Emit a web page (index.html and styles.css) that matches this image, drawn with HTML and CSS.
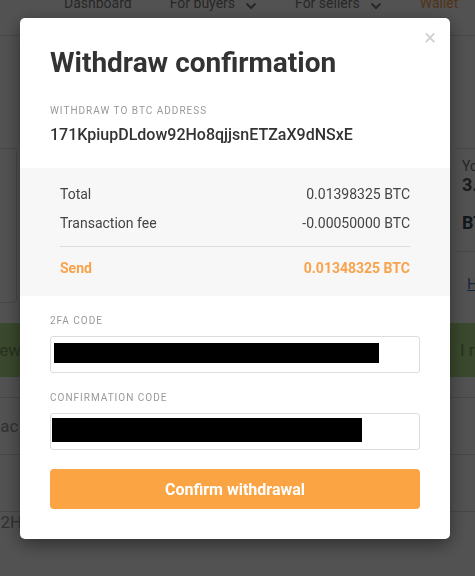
FILE: index.html
```html
<!DOCTYPE html>
<html lang="en">
<head>
  <meta charset="UTF-8">
  <title>Wallet - Withdraw confirmation</title>
  <link rel="stylesheet" href="styles.css">
</head>
<body>
  <div class="nav">
    <a class="nav-link">Dashboard</a>
    <a class="nav-link">For buyers <svg class="caret" viewBox="0 0 12 8"><polyline points="1.5,1.5 6,6 10.5,1.5"/></svg></a>
    <a class="nav-link">For sellers <svg class="caret" viewBox="0 0 12 8"><polyline points="1.5,1.5 6,6 10.5,1.5"/></svg></a>
    <a class="nav-link wallet">Wallet</a>
  </div>

  <div class="top-row">
    <div class="card card-left"></div>
    <div class="card card-right">
      <div class="balance-label">Your balance</div>
      <div class="balance-value">3.01</div>
      <div class="balance-unit">BTC</div>
    </div>
  </div>
  <div class="history-link">Hi</div>

  <div class="alert">
    <span class="alert-left">New</span>
    <span class="alert-right">l req</span>
  </div>

  <div class="table">
    <div class="table-row"><span class="cell">Transac</span></div>
    <div class="table-row"><span class="cell"></span></div>
    <div class="table-row row-top"><span class="cell cell-addr">92Ho</span></div>
  </div>

  <div class="overlay">
    <div class="modal">
      <span class="close">&times;</span>
      <h2 class="modal-title">Withdraw confirmation</h2>
      <div class="field-label first">Withdraw to BTC address</div>
      <div class="address">171KpiupDLdow92Ho8qjjsnETZaX9dNSxE</div>

      <div class="summary">
        <div class="summary-row"><span>Total</span><span>0.01398325 BTC</span></div>
        <div class="summary-row"><span>Transaction fee</span><span>-0.00050000 BTC</span></div>
        <div class="summary-row send"><span>Send</span><span>0.01348325 BTC</span></div>
      </div>

      <div class="field-label">2FA code</div>
      <div class="input"><span class="redact redact-2fa"></span></div>
      <div class="field-label">Confirmation code</div>
      <div class="input"><span class="redact redact-conf"></span></div>

      <button class="btn-confirm">Confirm withdrawal</button>
    </div>
  </div>
</body>
</html>
```

FILE: styles.css
```css
body {
  margin: 0;
  background: #fff;
  font-family: Roboto, 'Liberation Sans', sans-serif;
  color: #333;
  overflow: hidden;
  height: 576px;
}

/* page behind the dialog */
.nav {
  height: 36px;
  border-bottom: 1px solid #ddd;
  box-sizing: border-box;
  display: flex;
  align-items: flex-start;
  gap: 38px;
  padding-left: 64px;
  overflow: hidden;
}
.nav-link {
  margin-top: -5px;
  font-size: 14px;
  line-height: 16px;
  color: #7a7a7a;
  white-space: nowrap;
  display: flex;
  align-items: center;
}
.nav-link.wallet {
  color: #f9a24c;
}
.caret {
  width: 12px;
  height: 8px;
  margin-left: 10px;
  margin-top: 6px;
  fill: none;
  stroke: #7a7a7a;
  stroke-width: 2;
}
.top-row {
  display: flex;
  justify-content: space-between;
  margin-top: 112px;
  height: 155px;
}
.card {
  border: 1px solid #ddd;
  box-sizing: border-box;
}
.card-left {
  width: 120px;
  margin-left: -103px;
  border-radius: 4px;
}
.card-right {
  width: 20px;
  height: 104px;
  border-width: 1px 0;
  padding: 8px 0 0 7px;
  overflow: hidden;
  white-space: nowrap;
}
.balance-label {
  font-size: 14px;
  line-height: 18px;
  color: #777;
}
.balance-value {
  font-size: 18px;
  line-height: 20px;
  font-weight: 700;
  color: #555;
}
.balance-unit {
  font-size: 18px;
  line-height: 20px;
  font-weight: 700;
  color: #3a4a5c;
  margin-top: 18px;
}
.history-link {
  margin: -28px 0 0 467px;
  font-size: 15px;
  line-height: 18px;
  color: #3b7bbf;
  text-decoration: underline;
  white-space: nowrap;
}
.alert {
  margin-top: 30px;
  height: 54px;
  background: #b4e08c;
  display: flex;
  justify-content: space-between;
  align-items: center;
  font-size: 17px;
  color: #7a9a5f;
  overflow: hidden;
}
.alert-left {
  margin-left: -13px;
}
.alert-right {
  margin-right: -18px;
}
.table {
  margin-top: 20px;
}
.table-row {
  border-top: 1px solid #ddd;
  height: 56px;
  display: flex;
  align-items: center;
  font-size: 17px;
  color: #999;
  overflow: hidden;
}
.table-row.row-top {
  align-items: flex-start;
  box-sizing: border-box;
}
.cell {
  margin-left: -42px;
}
.cell.cell-addr {
  margin-left: -9px;
}

/* dialog */
.overlay {
  position: fixed;
  inset: 0;
  background: rgba(0, 0, 0, 0.68);
}
.modal {
  position: relative;
  width: 430px;
  margin: 18px 0 0 20px;
  box-sizing: border-box;
  padding: 28px 30px 30px;
  background: #fff;
  border-radius: 5px;
  box-shadow: 0 5px 18px rgba(0, 0, 0, 0.45);
}
.close {
  position: absolute;
  top: 9px;
  right: 14px;
  font-size: 22px;
  line-height: 22px;
  color: #d0d0d0;
}
.modal-title {
  margin: 0;
  font-size: 28px;
  line-height: 34px;
  font-weight: 700;
  color: #333;
}
.field-label {
  font-size: 10px;
  line-height: 14px;
  letter-spacing: 1px;
  text-transform: uppercase;
  color: #999;
  margin: 18px 0 8px;
}
.field-label.first {
  margin: 24px 0 7px;
}
.address {
  font-size: 16px;
  line-height: 20px;
  font-weight: 500;
  color: #333;
}
.summary {
  margin: 23px -30px 0;
  padding: 12px 40px 13px;
  background: #f7f7f7;
}
.summary-row {
  display: flex;
  justify-content: space-between;
  font-size: 14px;
  line-height: 29px;
  color: #444;
}
.summary-row.send {
  margin-top: 8px;
  padding-top: 7px;
  border-top: 1px solid #ddd;
  font-weight: 700;
  color: #f9a24c;
}
.input {
  height: 37px;
  box-sizing: border-box;
  border: 1px solid #ddd;
  border-radius: 3px;
  display: flex;
  align-items: flex-start;
}
.redact {
  background: #000;
}
.redact-2fa {
  width: 325px;
  height: 20px;
  margin: 6px 0 0 3px;
}
.redact-conf {
  width: 310px;
  height: 24px;
  margin: 4px 0 0 1px;
}
.btn-confirm {
  display: block;
  width: 100%;
  height: 40px;
  margin-top: 19px;
  border: none;
  border-radius: 4px;
  background: #fba444;
  color: #fff;
  font-family: Roboto, 'Liberation Sans', sans-serif;
  font-size: 16px;
  font-weight: 700;
  cursor: pointer;
}
```
